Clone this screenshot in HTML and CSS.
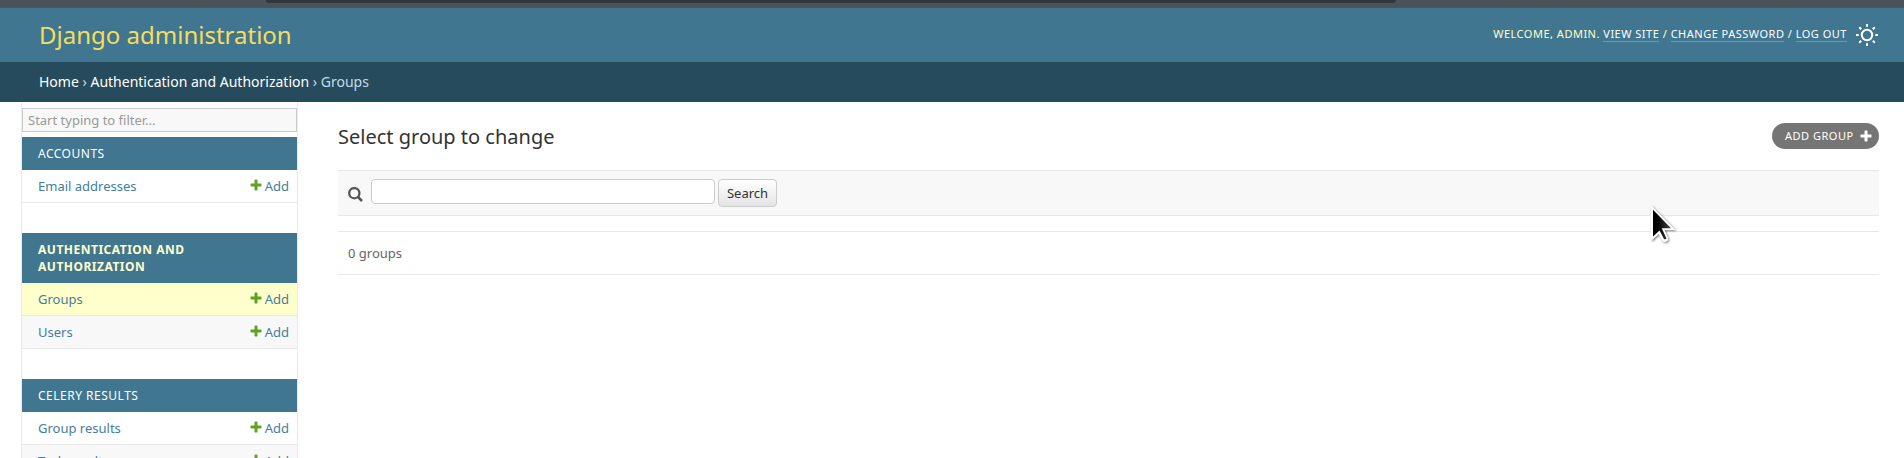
FILE: index.html
```
<!DOCTYPE html>
<html lang="en">
<head>
<meta charset="utf-8">
<title>Select group to change | Django site admin</title>
<link rel="stylesheet" href="styles.css">
</head>
<body>
<svg class="defs" aria-hidden="true">
  <symbol id="plus" viewBox="0 0 1792 1792"><path d="M1600 796v192q0 40-28 68t-68 28h-416v416q0 40-28 68t-68 28h-192q-40 0-68-28t-28-68v-416h-416q-40 0-68-28t-28-68v-192q0-40 28-68t68-28h416v-416q0-40 28-68t68-28h192q40 0 68 28t28 68v416h416q40 0 68 28t28 68z"/></symbol>
</svg>
<div class="page">
  <div class="window-strip"><div class="url-bar"></div></div>
  <header class="header">
    <h1 class="site-name">Django administration</h1>
    <div class="user-tools">
      <div class="tools-text">Welcome, admin. <a>View site</a> / <a>Change password</a> / <a>Log out</a></div>
      <svg class="theme-icon" viewBox="0 0 24 24" fill="none" stroke="#fff" stroke-width="2">
        <circle cx="12" cy="12" r="5.2"/>
        <path d="M12 1v2.700M12 20.300v2.700M1 12h2.700M20.300 12h2.700M4.200 4.200l2 2M17.800 17.800l2 2M4.200 19.800l2-2M17.800 6.200l2-2"/>
      </svg>
    </div>
  </header>
  <nav class="breadcrumbs"><a>Home</a> › <a>Authentication and Authorization</a> › Groups</nav>
  <div class="main">
    <nav class="sidebar">
      <input class="filter" type="text" placeholder="Start typing to filter...">
      <section class="module">
        <h2 class="caption">Accounts</h2>
        <div class="row"><a>Email addresses</a><a class="add"><svg class="plus"><use href="#plus"/></svg>Add</a></div>
      </section>
      <section class="module">
        <h2 class="caption current-app">Authentication and Authorization</h2>
        <div class="row current"><a>Groups</a><a class="add"><svg class="plus"><use href="#plus"/></svg>Add</a></div>
        <div class="row alt"><a>Users</a><a class="add"><svg class="plus"><use href="#plus"/></svg>Add</a></div>
      </section>
      <section class="module">
        <h2 class="caption">Celery Results</h2>
        <div class="row"><a>Group results</a><a class="add"><svg class="plus"><use href="#plus"/></svg>Add</a></div>
        <div class="row alt"><a>Task results</a><a class="add"><svg class="plus"><use href="#plus"/></svg>Add</a></div>
      </section>
    </nav>
    <main class="content">
      <div class="title-row">
        <h1 class="title">Select group to change</h1>
        <a class="add-button">Add group<svg class="button-plus"><use href="#plus"/></svg></a>
      </div>
      <form class="toolbar">
        <svg class="search-icon" viewBox="0 0 15 15" fill="none" stroke="#555"><circle cx="6.3" cy="6.2" r="5.1" stroke-width="2.3"/><path d="M10 10l4 4" stroke-width="2.5"/></svg>
        <input class="search-input" type="text">
        <button class="search-button" type="button">Search</button>
      </form>
      <p class="paginator">0 groups</p>
    </main>
  </div>
  <svg class="cursor" viewBox="0 0 30 42">
    <defs><linearGradient id="pointer" x1="0" y1="0" x2="1" y2="0"><stop offset=".25" stop-color="#000"/><stop offset="1" stop-color="#444"/></linearGradient></defs>
    <path d="M1 1V37L8.800 30L12.500 37Q14.500 38.700 17 37.300Q19 36 17.800 33.500L14.500 26H25.500Z" fill="#fff"/>
    <path d="M3 5.800V32.400L9.500 26.500L14 35Q15.500 35.600 16.500 34.400L11.800 24.200H21Z" fill="url(#pointer)"/>
  </svg>
</div>
</body>
</html>
```
FILE: styles.css
```
* { box-sizing: border-box; }
body {
  margin: 0;
  font-family: "Noto Sans", "Liberation Sans", sans-serif;
  font-size: 13px;
  color: #333;
  background: #fff;
}
h1, h2, p { margin: 0; font-weight: 400; }
.defs { display: none; }
.page {
  position: relative;
  height: 458px;
  overflow: hidden;
  display: flex;
  flex-direction: column;
}
.window-strip {
  flex: none;
  height: 8px;
  padding: 0 508px 0 266px;
  background: #4b535a;
  border-bottom: 1px solid #4e5656;
}
.url-bar { height: 3px; background: #30373a; border-radius: 0 0 4px 4px; }
.header {
  flex: none;
  height: 54px;
  padding: 0 25px 0 39px;
  display: flex;
  align-items: center;
  justify-content: space-between;
  background: #417690;
}
.site-name { font-size: 24px; line-height: 32px; color: #f5dd5d; }
.user-tools { display: flex; align-items: center; gap: 8px; }
.tools-text {
  font-size: 11px;
  line-height: 15px;
  letter-spacing: 0.5px;
  text-transform: uppercase;
  color: #ffc;
  padding-bottom: 4px;
}
.tools-text a { color: #fff; border-bottom: 1px solid rgba(255, 255, 255, 0.25); }
.theme-icon { width: 24px; height: 24px; }
.breadcrumbs {
  flex: none;
  height: 40px;
  padding-left: 39px;
  line-height: 40px;
  font-size: 14px;
  color: #c4dce8;
  background: #264b5d;
}
.breadcrumbs a { color: #fff; }
.main { flex: 1; min-height: 0; display: flex; }
.sidebar {
  flex: none;
  width: 277px;
  margin-left: 21px;
  padding-top: 6px;
  border: solid #eaeaea;
  border-width: 0 1px;
}
.filter {
  display: block;
  width: 100%;
  height: 24px;
  margin-bottom: 5px;
  padding: 2px 5px;
  border: 1px solid #ccc;
  background: #f8f8f8;
  font: 13px "Noto Sans", sans-serif;
}
.filter::placeholder { color: #999; }
.module { margin-bottom: 30px; }
.caption {
  padding: 8px 16px;
  font-size: 12px;
  line-height: 17px;
  letter-spacing: 0.5px;
  text-transform: uppercase;
  color: #fff;
  background: #417690;
}
.current-app { font-weight: 700; color: #ffc; }
.row {
  height: 33px;
  padding: 0 8px 0 16px;
  display: flex;
  align-items: center;
  justify-content: space-between;
  line-height: 18px;
  color: #447e9b;
  border-bottom: 1px solid #e8e8e8;
}
.alt { background: #f8f8f8; }
.current { background: #ffc; }
.add { display: flex; gap: 2px; }
.plus { width: 14px; height: 14px; margin-top: 0.5px; fill: #5fa225; }
.content { flex: 1; padding: 21px 25px 0 40px; }
.title-row { height: 47px; display: flex; justify-content: space-between; align-items: flex-start; }
.title { font-size: 20px; line-height: 27px; }
.add-button {
  width: 107px;
  height: 26px;
  padding: 0 6px 1px 13px;
  display: flex;
  align-items: center;
  justify-content: space-between;
  font-size: 11px;
  line-height: 24px;
  letter-spacing: 0.5px;
  text-transform: uppercase;
  color: #fff;
  background: #757575;
  border-radius: 13px;
}
.button-plus { width: 14px; height: 14px; margin-top: 1px; fill: #fff; }
.toolbar {
  height: 46px;
  padding: 8px 10px;
  display: flex;
  align-items: flex-start;
  background: #f8f8f8;
  border: solid #e8e8e8;
  border-width: 1px 0;
}
.search-icon { width: 15px; height: 15px; margin: 8px 8px 0 0; }
.search-input {
  width: 344px;
  height: 25px;
  margin-right: 3px;
  border: 1px solid #ccc;
  border-radius: 4px;
  background: #fff;
}
.search-button {
  width: 59px;
  height: 28px;
  padding: 0;
  font: 13px "Noto Sans", sans-serif;
  color: #333;
  border: 1px solid #ccc;
  border-radius: 4px;
  background: #fff linear-gradient(#fff, #e4e4e4);
}
.paginator {
  height: 44px;
  margin-top: 15px;
  padding-left: 10px;
  line-height: 42px;
  color: #666;
  border: solid #e8e8e8;
  border-width: 1px 0;
}
.cursor {
  position: absolute;
  left: 1650px;
  top: 204px;
  width: 30px;
  height: 42px;
  filter: drop-shadow(1px 1px 1px rgba(0, 0, 0, 0.5));
}
```
